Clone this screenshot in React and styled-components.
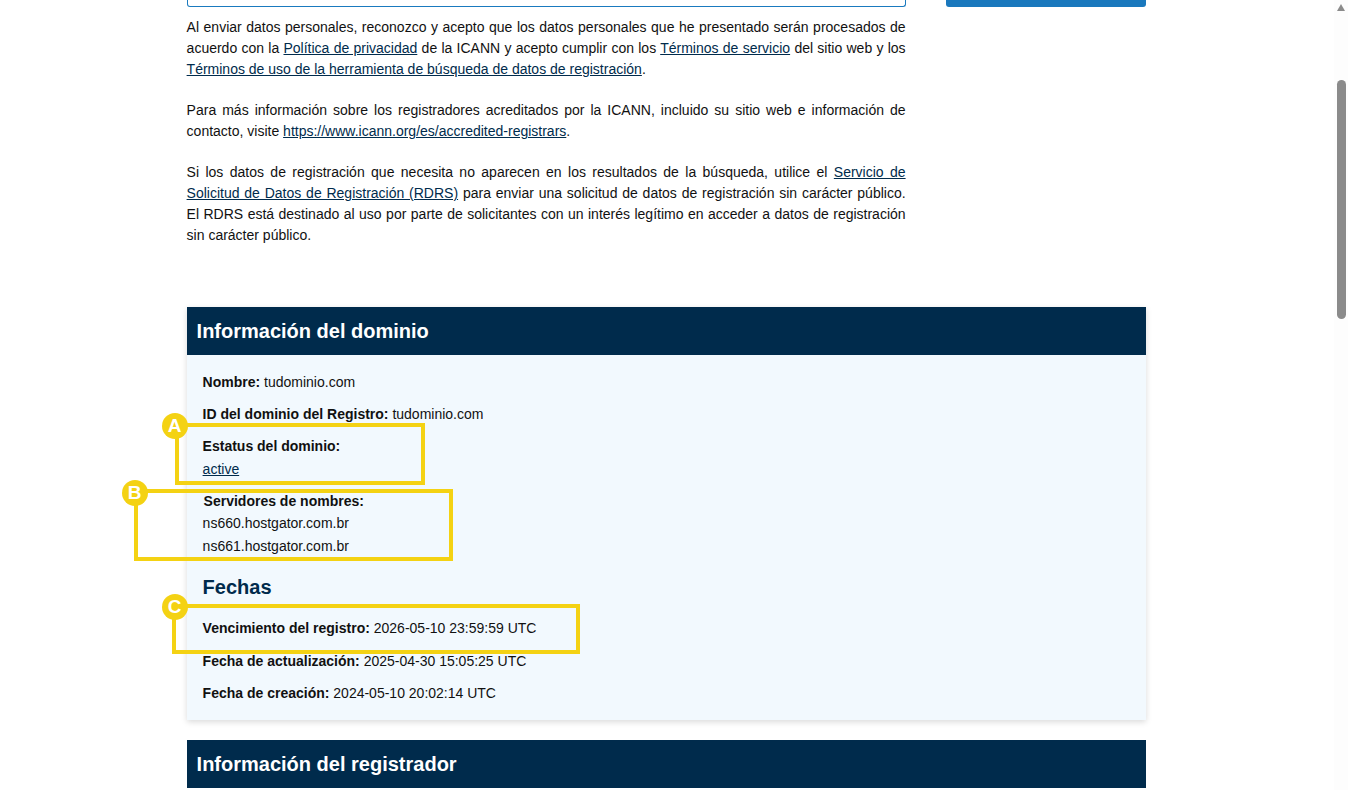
import styled, { createGlobalStyle } from 'styled-components';

const GlobalStyle = createGlobalStyle`
  html, body {
    margin: 0;
    padding: 0;
    height: 100%;
    overflow: hidden;
    background: #fff;
  }
  body {
    font-family: "Liberation Sans", Arial, sans-serif;
    font-size: 14px;
    color: #111;
  }
`;

const App = () => {
  return (
    <Shell>
      <GlobalStyle />
      <Page>
        <TopRow>
          <InputEdge />
          <SubmitEdge />
        </TopRow>
        <Legal>
          <p>
            Al enviar datos personales, reconozco y acepto que los datos personales que he presentado serán procesados de
            acuerdo con la <a href="#">Política de privacidad</a> de la ICANN y acepto cumplir con los{' '}
            <a href="#">Términos de servicio</a> del sitio web y los{' '}
            <a href="#">Términos de uso de la herramienta de búsqueda de datos de registración</a>.
          </p>
          <p>
            Para más información sobre los registradores acreditados por la ICANN, incluido su sitio web e información de
            contacto, visite <a href="#">https://www.icann.org/es/accredited-registrars</a>.
          </p>
          <p>
            Si los datos de registración que necesita no aparecen en los resultados de la búsqueda, utilice el{' '}
            <a href="#">Servicio de Solicitud de Datos de Registración (RDRS)</a> para enviar una solicitud de datos de
            registración sin carácter público. El RDRS está destinado al uso por parte de solicitantes con un interés
            legítimo en acceder a datos de registración sin carácter público.
          </p>
        </Legal>

        <Section>
          <SectionTitle>Información del dominio</SectionTitle>
          <SectionBody>
            <Field><b>Nombre:</b> tudominio.com</Field>
            <Field><b>ID del dominio del Registro:</b> tudominio.com</Field>
            <Stacked>
              <b>Estatus del dominio:</b>
              <a href="#">active</a>
            </Stacked>
            <NameServers>
              <b>Servidores de nombres:</b>
              <span>ns660.hostgator.com.br</span>
              <span>ns661.hostgator.com.br</span>
            </NameServers>
            <SubTitle>Fechas</SubTitle>
            <Field $gap={11}><b>Vencimiento del registro:</b> 2026-05-10 23:59:59 UTC</Field>
            <Field><b>Fecha de actualización:</b> 2025-04-30 15:05:25 UTC</Field>
            <Field><b>Fecha de creación:</b> 2024-05-10 20:02:14 UTC</Field>
          </SectionBody>
          <Callout $left={-12} $top={116} $width={250} $height={62} />
          <Callout $left={-53} $top={182} $width={319} $height={72} />
          <Callout $left={-15} $top={297} $width={408} $height={50} />
          <Badge $left={-25} $top={106}>A</Badge>
          <Badge $left={-65} $top={173}>B</Badge>
          <Badge $left={-25} $top={287}>C</Badge>
        </Section>

        <NextSection>
          <SectionTitle>Información del registrador</SectionTitle>
        </NextSection>
      </Page>

      <Scrollbar>
        <ArrowUp />
        <Thumb />
      </Scrollbar>
    </Shell>
  );
};

const Shell = styled.div`
  display: flex;
  height: 790px;
  overflow: hidden;
`;

const Page = styled.main`
  flex: 1;
  min-width: 0;
  padding: 0 0 0 186.6px;
`;

const TopRow = styled.div`
  display: flex;
  justify-content: space-between;
  width: 959px;
  height: 7px;
`;

const InputEdge = styled.div`
  box-sizing: border-box;
  width: 719px;
  height: 7px;
  border: 1px solid #1a7abf;
  border-top: 0;
  border-radius: 0 0 3px 3px;
`;

const SubmitEdge = styled.div`
  width: 200px;
  height: 7px;
  background: #1a78bd;
  border-radius: 0 0 3px 3px;
`;

const Legal = styled.div`
  width: 719px;
  padding-top: 10px;
  line-height: 21px;
  text-align: justify;

  p {
    margin: 0 0 20px;
  }

  a {
    color: #002b4c;
    text-decoration: underline;
  }
`;

const Section = styled.section`
  position: relative;
  width: 959px;
  margin-top: 61px;
  box-shadow: 0 2px 6px rgba(0, 0, 0, 0.15);
`;

const NextSection = styled.section`
  width: 959px;
  margin-top: 20px;
`;

const SectionTitle = styled.h2`
  box-sizing: border-box;
  margin: 0;
  height: 48px;
  padding: 0 10px;
  background: #002b4c;
  color: #fff;
  font-size: 20px;
  font-weight: 700;
  line-height: 48px;
`;

const SectionBody = styled.div`
  box-sizing: border-box;
  height: 365px;
  padding: 16px 16px 0;
  background: #f2f9fe;
`;

const Field = styled.div`
  height: 22px;
  margin-bottom: ${(p) => p.$gap ?? 10}px;
  line-height: 22px;
  white-space: nowrap;
`;

const Stacked = styled.div`
  display: flex;
  flex-direction: column;
  align-items: flex-start;
  gap: 1px;
  margin-bottom: 10px;
  line-height: 22px;

  a {
    color: #002b4c;
  }
`;

const NameServers = styled(Stacked)`
  margin-bottom: 0;

  b {
    margin-left: 1px;
    margin-bottom: -1px;
  }
`;

const SubTitle = styled.h3`
  margin: 19px 0 18px;
  color: #002b4c;
  font-size: 20px;
  font-weight: 700;
  line-height: 23px;
`;

const Callout = styled.div`
  position: absolute;
  box-sizing: border-box;
  left: ${(p) => p.$left}px;
  top: ${(p) => p.$top}px;
  width: ${(p) => p.$width}px;
  height: ${(p) => p.$height}px;
  border: 4px solid #f4d213;
`;

const Badge = styled.div`
  position: absolute;
  left: ${(p) => p.$left}px;
  top: ${(p) => p.$top}px;
  width: 26px;
  height: 26px;
  border-radius: 50%;
  background: #f4d213;
  color: #fff;
  font-size: 19px;
  font-weight: 700;
  line-height: 26px;
  text-align: center;
`;

const Scrollbar = styled.div`
  position: relative;
  flex: none;
  width: 14px;
  background: #fdfdfd;
`;

const ArrowUp = styled.div`
  position: absolute;
  top: 4px;
  left: 3px;
  width: 0;
  height: 0;
  border-left: 4.5px solid transparent;
  border-right: 4.5px solid transparent;
  border-bottom: 7px solid #8b8b8b;
`;

const Thumb = styled.div`
  position: absolute;
  top: 80px;
  left: 3px;
  width: 9px;
  height: 239px;
  border-radius: 5px;
  background: #8b8b8b;
`;

export default App;
